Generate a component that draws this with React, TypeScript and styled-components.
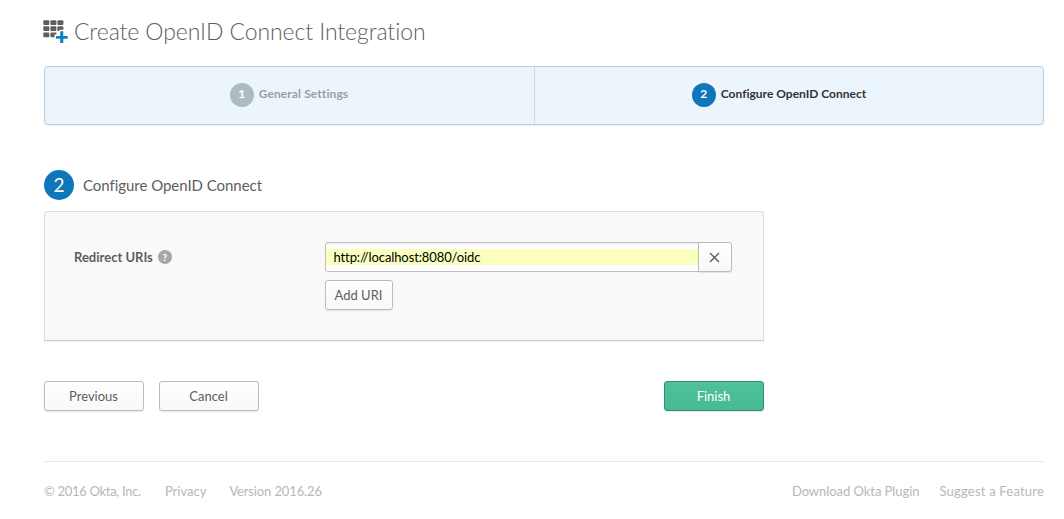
import React from "react";
import styled, { createGlobalStyle, css } from "styled-components";

const GlobalStyle = createGlobalStyle`
  * { box-sizing: border-box; }
  body {
    margin: 0;
    background: #fff;
    color: #5e5e5e;
    font-family: Lato, "Open Sans", sans-serif;
    font-size: 13px;
    font-variant-ligatures: none;
  }
`;

const Page = styled.div`
  width: 1000px;
  margin: 0 0 0 44px;
  padding-top: 16px;
`;

const TitleBar = styled.header`
  display: flex;
  align-items: flex-start;
  height: 50px;
`;

const AppsIcon = styled.svg`
  display: block;
  flex: none;
  width: 25px;
  height: 24px;
  margin: 4px 6px 0 -1px;
`;

const Title = styled.h1`
  margin: 0;
  font-size: 23px;
  font-weight: 300;
  line-height: 30px;
  letter-spacing: -0.09px;
  white-space: nowrap;
`;

const Wizard = styled.ol`
  display: flex;
  height: 59px;
  margin: 0;
  padding: 0;
  list-style: none;
  background: #ecf5fb;
  border: 1px solid #c0cdd6;
  border-radius: 4px;
  box-shadow: 0 1px 1px rgba(0, 0, 0, 0.06);
`;

const Step = styled.li<{ $current?: boolean }>`
  display: flex;
  align-items: flex-start;
  justify-content: center;
  padding-top: 16px;
  font-size: 12px;
  font-weight: 700;
  line-height: 24px;
  white-space: nowrap;
  ${({ $current }) =>
    $current
      ? css`
          width: 508px;
          padding-right: 20px;
          color: #333;
        `
      : css`
          width: 490px;
          padding-right: 2px;
          color: #97a1a6;
        `}
`;

const StepNumber = styled.span<{ $current?: boolean }>`
  width: 24px;
  height: 24px;
  margin-right: 5px;
  border-radius: 50%;
  background: ${({ $current }) => ($current ? "#0f76b9" : "#aebbc2")};
  color: #fff;
  line-height: 22px;
  text-align: center;
`;

const StepLabel = styled.span<{ $spacing: number }>`
  line-height: 22px;
  letter-spacing: ${({ $spacing }) => $spacing}px;
`;

const StepDivider = styled.li`
  width: 1px;
  margin-left: -1px;
  background: #ccd8e0;
`;

const SectionHeader = styled.div`
  display: flex;
  align-items: center;
  height: 30px;
  margin-top: 45px;
`;

const SectionNumber = styled.span`
  width: 30px;
  height: 30px;
  margin-right: 9px;
  border-radius: 50%;
  background: #0f76b9;
  color: #fff;
  font-size: 19px;
  font-weight: 400;
  line-height: 29px;
  text-align: center;
`;

const SectionTitle = styled.h2`
  margin: 0;
  font-size: 15px;
  font-weight: 400;
  line-height: 30px;
  letter-spacing: -0.04px;
`;

const Panel = styled.section`
  display: flex;
  width: 720px;
  height: 130px;
  margin-top: 11px;
  padding: 30px 31px 0 29px;
  background: #f9f9f9;
  border: 1px solid #ddd;
  border-bottom-color: #c8c8c8;
  border-radius: 3px 3px 0 0;
  box-shadow: 0 1px 1px rgba(0, 0, 0, 0.05);
`;

const FieldLabel = styled.div`
  display: flex;
  align-items: center;
  width: 251px;
  height: 30px;
  font-weight: 700;
  letter-spacing: 0;
`;

const HelpBadge = styled.span`
  width: 14px;
  height: 14px;
  margin-left: 5px;
  border-radius: 50%;
  background: #a6a6a6;
  color: #fff;
  font-size: 10px;
  font-weight: 900;
  line-height: 14px;
  text-align: center;
`;

const FieldControls = styled.div`
  width: 407px;
`;

const InputGroup = styled.div`
  display: flex;
  height: 30px;
  margin-bottom: 8px;
`;

const InputFrame = styled.div`
  display: flex;
  align-items: center;
  width: 374px;
  padding: 0;
  background: #fff;
  border: 1px solid #bfbfbf;
  border-radius: 3px 0 0 3px;
  box-shadow: inset 0 1px 1px rgba(0, 0, 0, 0.08);
`;

const UriInput = styled.input`
  width: 100%;
  height: 16px;
  padding: 0 8px 1px 7.5px;
  border: 0;
  border-radius: 2px;
  outline: 0;
  background: #faffbd;
  color: #000;
  font: inherit;
  letter-spacing: -0.11px;
`;

const Button = styled.button<{ $width: number; $primary?: boolean; $spacing?: number }>`
  width: ${({ $width }) => $width}px;
  height: 30px;
  padding: 0 1px 1px 0;
  border: 1px solid ${({ $primary }) => ($primary ? "#33906f" : "#bcbcbc")};
  border-radius: 3px;
  background: ${({ $primary }) =>
    $primary ? "linear-gradient(#4fc19d, #46ba94)" : "linear-gradient(#fff, #f8f8f8)"};
  box-shadow: 0 1px 1px rgba(0, 0, 0, 0.09);
  color: ${({ $primary }) => ($primary ? "#fff" : "#5e5e5e")};
  font: inherit;
  letter-spacing: ${({ $spacing = 0 }) => $spacing}px;
`;

const RemoveButton = styled(Button)`
  display: flex;
  align-items: center;
  justify-content: center;
  margin-left: -1px;
  padding: 0 1px 0 0;
  border-radius: 0 3px 3px 0;
`;

const Actions = styled.div`
  display: flex;
  gap: 15px;
  width: 720px;
  margin-top: 40px;

  > :last-child {
    margin-left: auto;
  }
`;

const Footer = styled.footer`
  display: flex;
  margin-top: 50px;
  padding-top: 19px;
  border-top: 1px solid #e8e8e8;
  color: #b7b7b7;
  line-height: 20px;
  white-space: nowrap;
`;

const FooterItem = styled.span<{ $gap?: number; $spacing?: number; $push?: boolean }>`
  margin-left: ${({ $push }) => ($push ? "auto" : 0)};
  margin-right: ${({ $gap = 0 }) => $gap}px;
  letter-spacing: ${({ $spacing = 0 }) => $spacing}px;
`;

export default function App() {
  return (
    <>
      <GlobalStyle />
      <Page>
        <TitleBar>
          <AppsIcon viewBox="0 0 25 24" aria-hidden="true">
            <g fill="#5e5e5e">
              <rect x="0.3" y="0.2" width="6" height="4.8" rx="1" />
              <rect x="7.4" y="0.2" width="6" height="4.8" rx="1" />
              <rect x="14.4" y="0.2" width="6" height="4.8" rx="1" />
              <rect x="0.3" y="6.3" width="6" height="4.8" rx="1" />
              <rect x="7.4" y="6.3" width="6" height="4.8" rx="1" />
              <path d="M15.4 6.3h4q1 0 1 1v2.5h-4v1.3h-2V7.3q0-1 1-1z" />
              <rect x="0.3" y="12.4" width="6" height="4.8" rx="1" />
              <path d="M8.4 12.4h5v2.1h-1.9v2.7H8.4q-1 0-1-1v-2.8q0-1 1-1z" />
            </g>
            <path
              d="M17.2 11.3h3.1v4.7h4.4v2.8h-4.4V23h-3.1v-4.2H13V16h4.2z"
              fill="#0f82c6"
            />
          </AppsIcon>
          <Title>Create OpenID Connect Integration</Title>
        </TitleBar>

        <Wizard>
          <Step>
            <StepNumber>1</StepNumber>
            <StepLabel $spacing={0.1}>General Settings</StepLabel>
          </Step>
          <StepDivider aria-hidden="true" />
          <Step $current>
            <StepNumber $current>2</StepNumber>
            <StepLabel $spacing={0}>Configure OpenID Connect</StepLabel>
          </Step>
        </Wizard>

        <SectionHeader>
          <SectionNumber>2</SectionNumber>
          <SectionTitle>Configure OpenID Connect</SectionTitle>
        </SectionHeader>

        <Panel>
          <FieldLabel>
            Redirect URIs
            <HelpBadge>?</HelpBadge>
          </FieldLabel>
          <FieldControls>
            <InputGroup>
              <InputFrame>
                <UriInput defaultValue="http://localhost:8080/oidc" aria-label="Redirect URI" />
              </InputFrame>
              <RemoveButton $width={34} aria-label="Remove URI">
                <svg width="11" height="11" viewBox="0 0 11 11" aria-hidden="true">
                  <path d="M1 1l9 9M10 1l-9 9" stroke="#5e5e5e" strokeWidth="1.4" fill="none" />
                </svg>
              </RemoveButton>
            </InputGroup>
            <Button $width={68}>Add URI</Button>
          </FieldControls>
        </Panel>

        <Actions>
          <Button $width={100}>Previous</Button>
          <Button $width={100}>Cancel</Button>
          <Button $width={100} $primary>Finish</Button>
        </Actions>

        <Footer>
          <FooterItem $gap={24} $spacing={-0.3}>© 2016 Okta, Inc.</FooterItem>
          <FooterItem $gap={23}>Privacy</FooterItem>
          <FooterItem $spacing={-0.13}>Version 2016.26</FooterItem>
          <FooterItem $push $gap={20} $spacing={-0.05}>Download Okta Plugin</FooterItem>
          <FooterItem $spacing={0.2}>Suggest a Feature</FooterItem>
        </Footer>
      </Page>
    </>
  );
}
